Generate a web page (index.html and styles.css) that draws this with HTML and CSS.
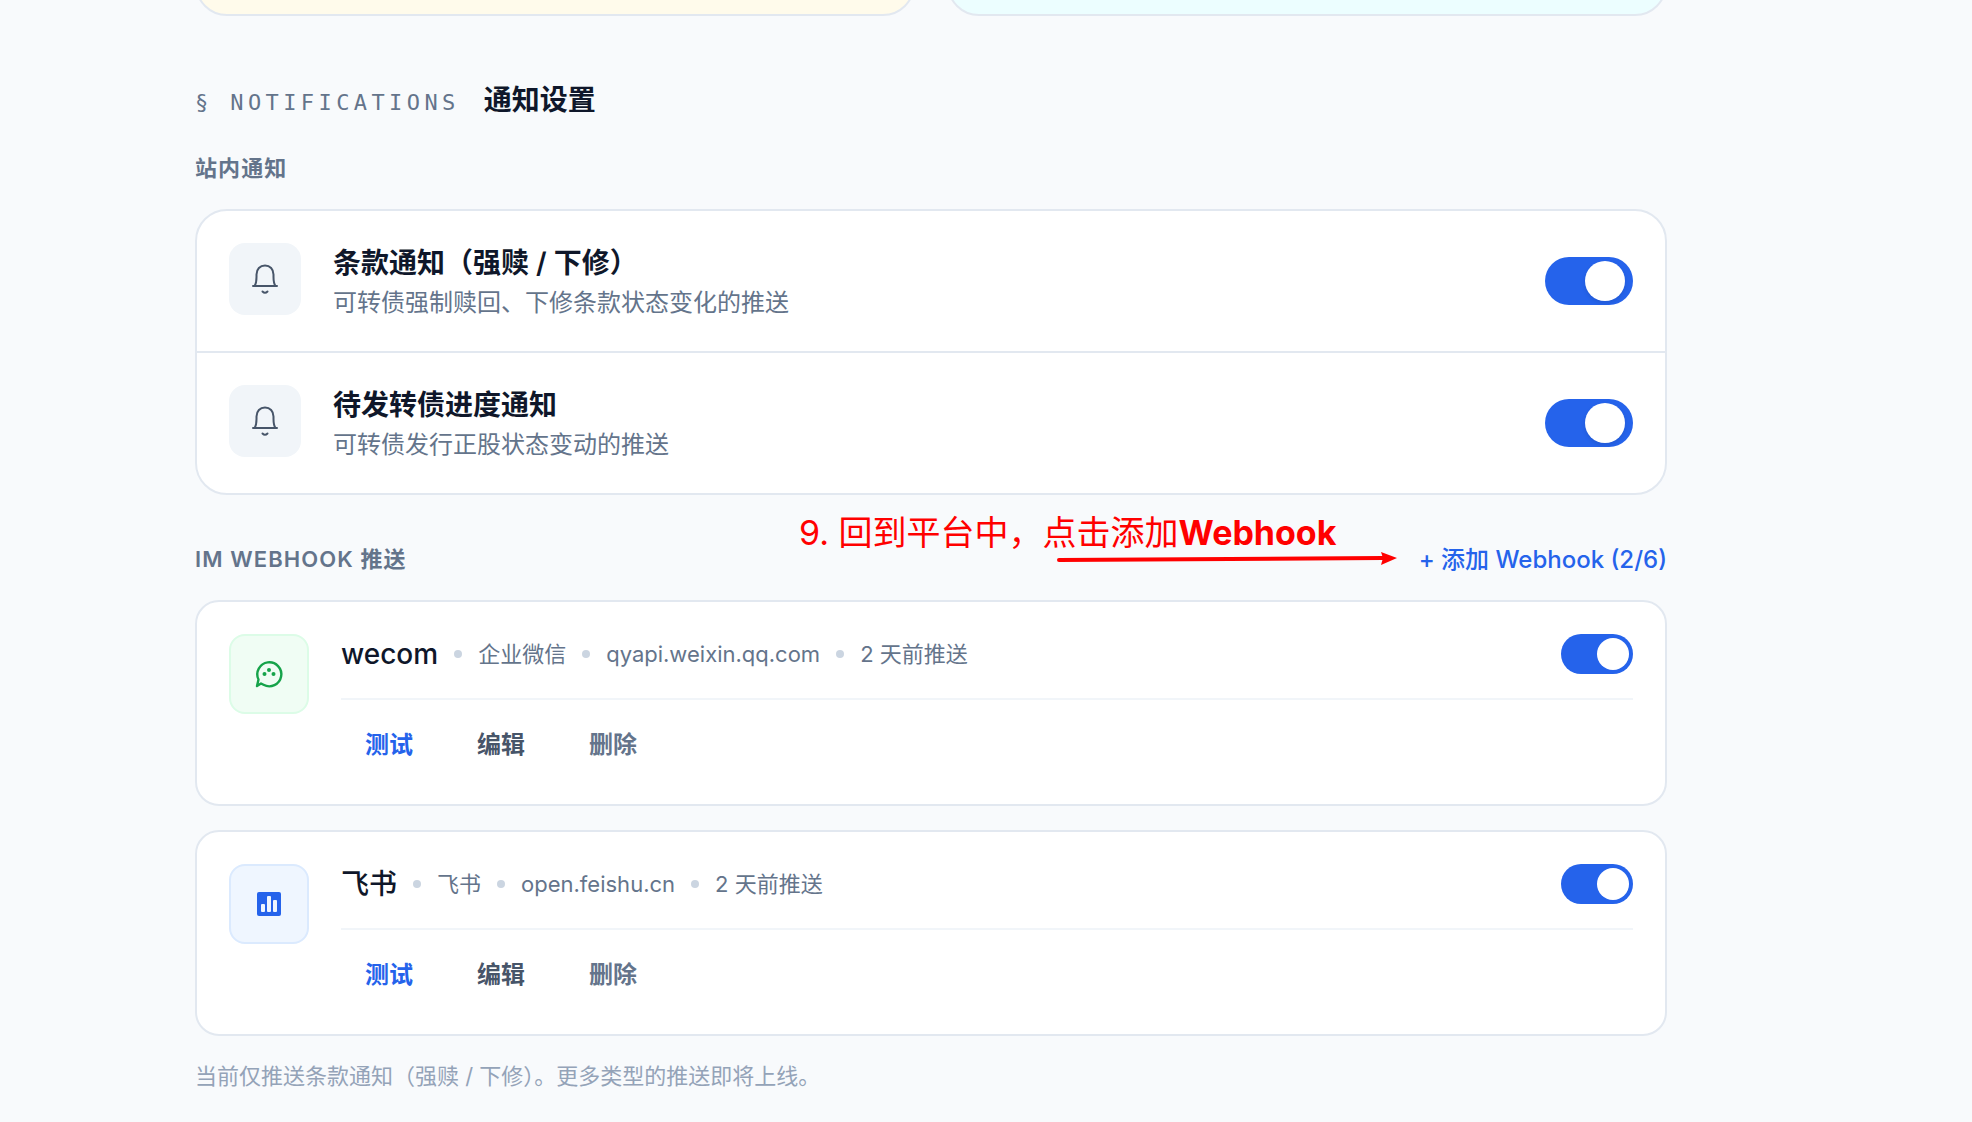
FILE: index.html
```html
<!DOCTYPE html>
<html lang="zh-CN">
<head>
    <meta charset="UTF-8">
    <meta name="viewport" content="width=device-width, initial-scale=1.0">
    <title>通知设置</title>
    <link rel="stylesheet" href="styles.css">
</head>
<body>
    <main class="page">
        <div class="plans">
            <div class="plan plan-yellow"></div>
            <div class="plan plan-cyan"></div>
        </div>

        <section class="notifications">
            <div class="section-head">
                <span class="section-tag">§ NOTIFICATIONS</span>
                <h2>通知设置</h2>
            </div>

            <h3 class="group-label">站内通知</h3>
            <div class="panel">
                <div class="panel-row">
                    <div class="bell-box">
                        <svg width="32" height="32" viewBox="0 0 32 32" fill="none" stroke="#475569" stroke-width="2" stroke-linecap="round" stroke-linejoin="round">
                            <path d="M4 23h24M5.500 23C7.500 20 7.500 17.500 7.500 14v-2.500C7.500 6 11 2.500 16 2.500s8.500 3.500 8.500 9V14c0 3.500 0 6 2 9"/>
                            <path d="M13.500 28.500q2.500 2.500 5 0"/>
                        </svg>
                    </div>
                    <div class="row-text">
                        <label class="row-title" for="termNotice">条款通知（强赎 / 下修）</label>
                        <p class="row-desc">可转债强制赎回、下修条款状态变化的推送</p>
                    </div>
                    <input type="checkbox" class="switch" id="termNotice" checked>
                </div>
                <div class="panel-row">
                    <div class="bell-box">
                        <svg width="32" height="32" viewBox="0 0 32 32" fill="none" stroke="#475569" stroke-width="2" stroke-linecap="round" stroke-linejoin="round">
                            <path d="M4 23h24M5.500 23C7.500 20 7.500 17.500 7.500 14v-2.500C7.500 6 11 2.500 16 2.500s8.500 3.500 8.500 9V14c0 3.500 0 6 2 9"/>
                            <path d="M13.500 28.500q2.500 2.500 5 0"/>
                        </svg>
                    </div>
                    <div class="row-text">
                        <label class="row-title" for="issueNotice">待发转债进度通知</label>
                        <p class="row-desc">可转债发行正股状态变动的推送</p>
                    </div>
                    <input type="checkbox" class="switch" id="issueNotice" checked>
                </div>
            </div>

            <div class="webhook-head">
                <h3 class="group-label">IM WEBHOOK 推送</h3>
                <button type="button" class="add-btn">+ 添加 Webhook (2/6)</button>
                <div class="annotation">
                    <p>9. 回到平台中，点击添加<b>Webhook</b></p>
                    <svg width="342" height="16" viewBox="0 0 342 16">
                        <path d="M4 8L328 6" stroke="#f00" stroke-width="4" stroke-linecap="round"/>
                        <path d="M342 6L326 0l2 6-2 7z" fill="#f00"/>
                    </svg>
                </div>
            </div>

            <div class="webhooks">
                <article class="webhook">
                    <div class="brand brand-green">
                        <svg width="32" height="32" viewBox="0 0 32 32" fill="none">
                            <path d="M4 28L5.500 21.500A12 12 0 1 1 10.500 26.800L8 25.500Z" stroke="#16a34a" stroke-width="2.400" stroke-linejoin="round"/>
                            <g fill="#16a34a">
                                <circle cx="11.500" cy="16" r="2"/>
                                <circle cx="16" cy="12" r="2"/>
                                <circle cx="20.500" cy="16" r="2"/>
                            </g>
                        </svg>
                    </div>
                    <div class="webhook-body">
                        <div class="webhook-info">
                            <label class="webhook-name" for="wecomOn">wecom</label>
                            <i class="dot"></i>
                            <span>企业微信</span>
                            <i class="dot"></i>
                            <span>qyapi.weixin.qq.com</span>
                            <i class="dot"></i>
                            <span>2 天前推送</span>
                            <input type="checkbox" class="switch switch-small" id="wecomOn" checked>
                        </div>
                        <div class="webhook-actions">
                            <button type="button" class="test-btn">测试</button>
                            <button type="button" class="edit-btn">编辑</button>
                            <button type="button" class="delete-btn">删除</button>
                        </div>
                    </div>
                </article>

                <article class="webhook">
                    <div class="brand brand-blue">
                        <svg width="32" height="32" viewBox="0 0 32 32">
                            <rect x="4" y="4" width="24" height="24" rx="2" fill="#2563eb"/>
                            <g fill="#eff6ff">
                                <rect x="8" y="16" width="4" height="8" rx="1"/>
                                <rect x="14" y="8" width="4" height="16" rx="1"/>
                                <rect x="20" y="12" width="4" height="12" rx="1"/>
                            </g>
                        </svg>
                    </div>
                    <div class="webhook-body">
                        <div class="webhook-info">
                            <label class="webhook-name" for="feishuOn">飞书</label>
                            <i class="dot"></i>
                            <span>飞书</span>
                            <i class="dot"></i>
                            <span>open.feishu.cn</span>
                            <i class="dot"></i>
                            <span>2 天前推送</span>
                            <input type="checkbox" class="switch switch-small" id="feishuOn" checked>
                        </div>
                        <div class="webhook-actions">
                            <button type="button" class="test-btn">测试</button>
                            <button type="button" class="edit-btn">编辑</button>
                            <button type="button" class="delete-btn">删除</button>
                        </div>
                    </div>
                </article>
            </div>

            <p class="note">当前仅推送条款通知（强赎 / 下修）。更多类型的推送即将上线。</p>
        </section>
    </main>
</body>
</html>
```

FILE: styles.css
```css
* {
    box-sizing: border-box;
}
body {
    margin: 0;
    background-color: #f8fafc;
    color: #0f172a;
    font-family: Inter, "Noto Sans CJK SC", sans-serif;
    font-size: 22px;
    line-height: 33px;
}
h2, h3, p {
    margin: 0;
}
button {
    border: none;
    background: none;
    padding: 0;
    font-family: inherit;
    font-size: 24px;
    font-weight: 500;
    cursor: pointer;
}
.page {
    padding: 0 305px 24px 195px;
    overflow: hidden;
}

/* bottom edge of the cards above */
.plans {
    display: grid;
    grid-template-columns: 1fr 1fr;
    gap: 32px;
    margin-top: -64px;
}
.plan {
    height: 80px;
    border: 2px solid #e2e8f0;
    border-radius: 32px;
}
.plan-yellow {
    background-color: #fffbeb;
}
.plan-cyan {
    background-color: #ecfeff;
}

.section-head {
    display: flex;
    align-items: baseline;
    gap: 24px;
    margin-top: 64px;
    margin-bottom: 32px;
}
.section-head h2 {
    font-size: 28px;
    font-weight: 600;
    line-height: 40px;
}
.section-tag {
    font-family: "DejaVu Sans Mono", monospace;
    letter-spacing: 0.2em;
    color: #64748b;
}
.group-label {
    font-size: 22px;
    font-weight: 600;
    letter-spacing: 0.05em;
    color: #64748b;
}

.panel {
    margin-top: 24px;
    background-color: white;
    border: 2px solid #e2e8f0;
    border-radius: 32px;
}
.panel-row {
    display: flex;
    align-items: center;
    gap: 32px;
    padding: 32px;
}
.panel-row + .panel-row {
    border-top: 2px solid #e2e8f0;
}
.bell-box {
    display: flex;
    align-items: center;
    justify-content: center;
    align-self: flex-start;
    width: 72px;
    height: 72px;
    border-radius: 16px;
    background-color: #f1f5f9;
}
.row-text {
    flex: 1;
}
.row-title {
    display: block;
    font-size: 28px;
    font-weight: 600;
    line-height: 40px;
}
.row-desc {
    font-size: 24px;
    line-height: 40px;
    margin-bottom: -4px;
    color: #64748b;
}

.switch {
    appearance: none;
    flex: none;
    width: 88px;
    height: 48px;
    margin: 0;
    padding: 4px 8px;
    border-radius: 24px;
    background-color: #cbd5e1;
    cursor: pointer;
    display: flex;
}
.switch::before {
    content: "";
    width: 40px;
    height: 40px;
    border-radius: 50%;
    background-color: white;
    box-shadow: 0 2px 4px rgba(0, 0, 0, 0.1);
}
.switch:checked {
    background-color: #2563eb;
    justify-content: flex-end;
}
.switch-small {
    width: 72px;
    height: 40px;
    margin-left: auto;
    padding: 4px;
}
.switch-small::before {
    width: 32px;
    height: 32px;
    box-shadow: none;
}

.webhook-head {
    position: relative;
    display: flex;
    justify-content: space-between;
    align-items: center;
    margin-top: 48px;
    margin-bottom: 24px;
}
.add-btn {
    line-height: 33px;
    color: #2563eb;
}
.annotation {
    position: absolute;
    right: 270px;
    bottom: 8px;
    width: 598px;
    display: flex;
    flex-direction: column;
    color: #ff0000;
    pointer-events: none;
}
.annotation p {
    font-size: 34px;
    font-weight: 400;
    line-height: 38px;
    white-space: nowrap;
}
.annotation b {
    font-weight: 700;
}
.annotation svg {
    align-self: flex-end;
}

.webhooks {
    display: flex;
    flex-direction: column;
    gap: 24px;
}
.webhook {
    display: flex;
    gap: 32px;
    padding: 32px;
    background-color: white;
    border: 2px solid #e2e8f0;
    border-radius: 24px;
}
.brand {
    display: flex;
    align-items: center;
    justify-content: center;
    flex: none;
    width: 80px;
    height: 80px;
    border: 2px solid;
    border-radius: 16px;
}
.brand-green {
    background-color: #f0fdf4;
    border-color: #dcfce7;
}
.brand-blue {
    background-color: #eff6ff;
    border-color: #dbeafe;
}
.webhook-body {
    flex: 1;
}
.webhook-info {
    display: flex;
    align-items: center;
    gap: 16px;
    padding-bottom: 24px;
    border-bottom: 2px solid #f1f5f9;
    color: #64748b;
}
.webhook-name {
    font-size: 28px;
    font-weight: 500;
    line-height: 40px;
    color: #0f172a;
}
.dot {
    width: 8px;
    height: 8px;
    border-radius: 50%;
    background-color: #cbd5e1;
}
.webhook-actions {
    display: flex;
    gap: 16px;
    padding-top: 16px;
}
.webhook-actions button {
    height: 56px;
    padding: 0 24px 4px;
    border-radius: 12px;
    font-weight: 600;
}
.webhook-actions button:hover {
    background-color: #f1f5f9;
}
.webhook-actions .test-btn {
    color: #2563eb;
}
.webhook-actions .edit-btn {
    color: #475569;
}
.webhook-actions .delete-btn {
    color: #64748b;
}

.note {
    margin-top: 24px;
    color: #94a3b8;
}
```
